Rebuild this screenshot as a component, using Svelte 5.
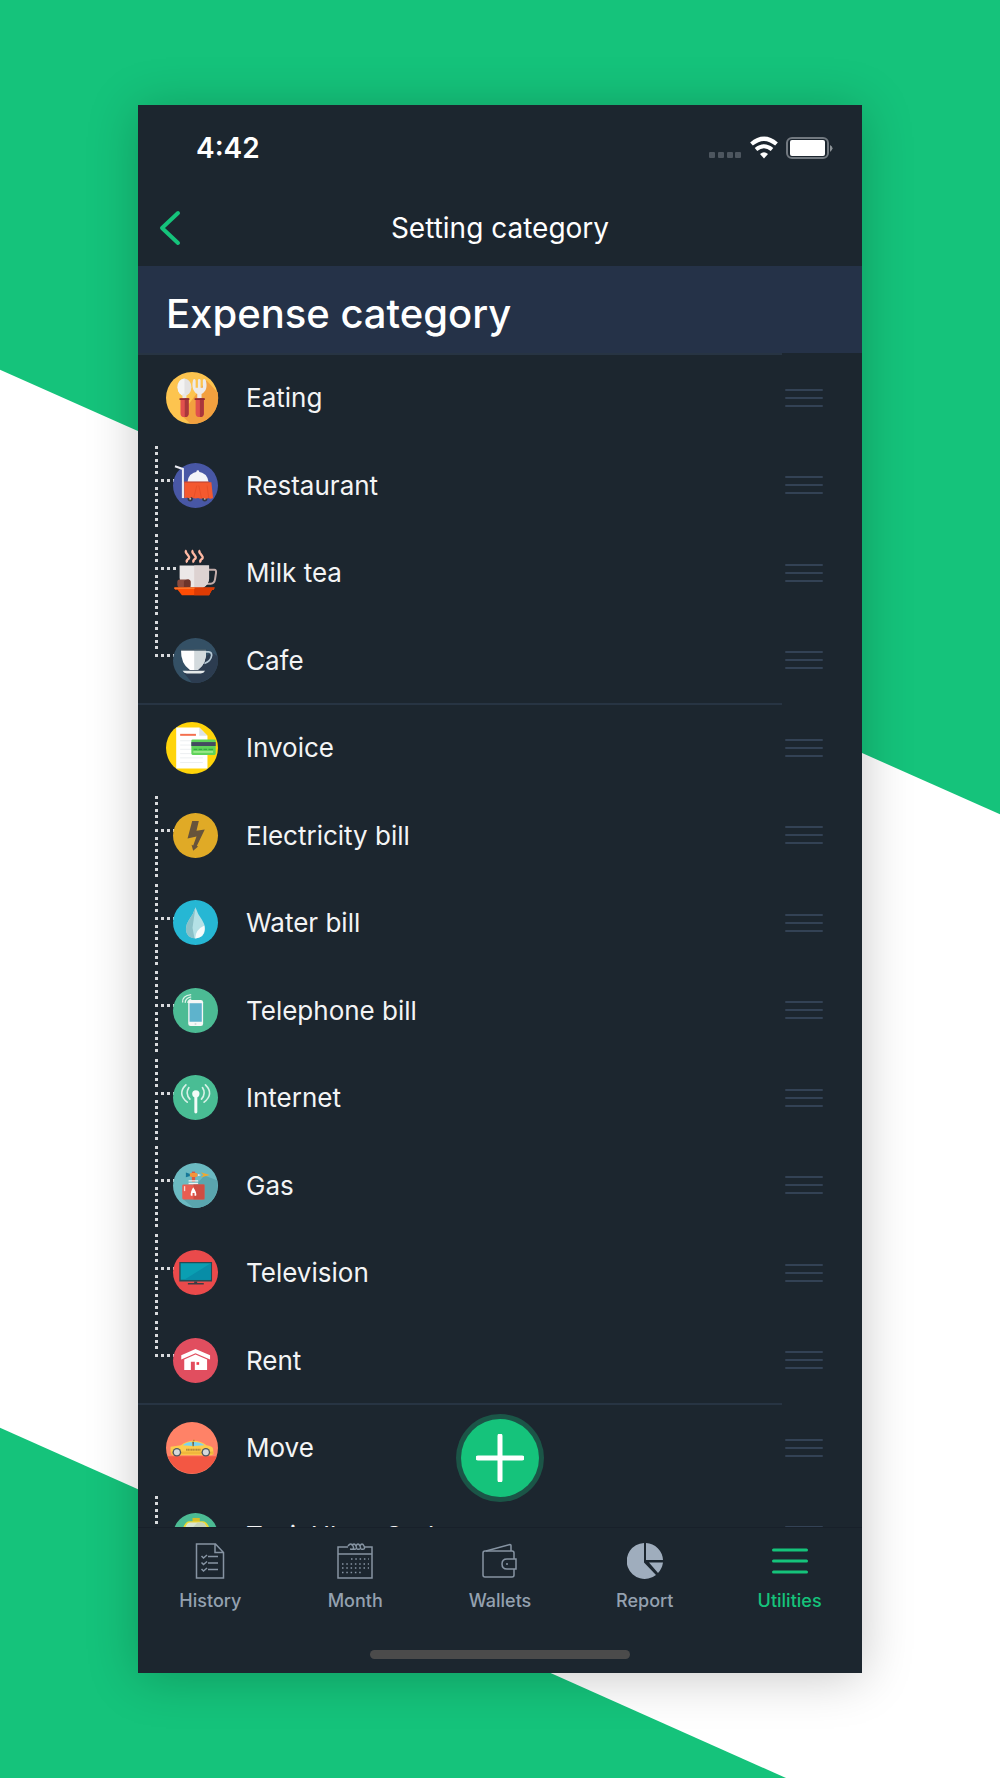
<script>
  const groups = [
    {
      name: 'Eating', icon: 'eating',
      children: [
        { name: 'Restaurant', icon: 'restaurant' },
        { name: 'Milk tea', icon: 'tea' },
        { name: 'Cafe', icon: 'cafe' }
      ]
    },
    {
      name: 'Invoice', icon: 'invoice',
      children: [
        { name: 'Electricity bill', icon: 'electricity' },
        { name: 'Water bill', icon: 'water' },
        { name: 'Telephone bill', icon: 'telephone' },
        { name: 'Internet', icon: 'internet' },
        { name: 'Gas', icon: 'gas' },
        { name: 'Television', icon: 'television' },
        { name: 'Rent', icon: 'rent' }
      ]
    },
    {
      name: 'Move', icon: 'move',
      children: [
        { name: 'Taxi, Uber, Grab', icon: 'taxi' }
      ]
    }
  ];
  const tabs = ['History', 'Month', 'Wallets', 'Report', 'Utilities'];
  const upper = [3, 9, 16, 22, 28];
  const lower = [44, 50, 56, 63, 69, 75, 81];
  const across = [0, 6, 12, 18];
</script>

{#snippet art(name)}
  {#if name === 'eating'}
    <svg class="art" viewBox="83 62 158 158" aria-hidden="true">
      <circle cx="162" cy="141" r="79" fill="#fdc44f" />
      <path d="M206 88L240 124A79 79 0 0 1 158 220L128 192Z" fill="#f2a03f" />
      <ellipse cx="139" cy="108" rx="21" ry="26" fill="#e4e2e2" />
      <path d="M139 82a21 26 0 0 1 0 52z" fill="#f4f3f3" transform="rotate(180 139 108)" />
      <path d="M133 128h12v16h-12z" fill="#e8e6e6" />
      <path d="M165 88q0-5 4-5t4 5v22h7V87q0-4 4-4t4 4v23h7V88q0-5 4-5t5 5c5 18 2 33-13 41v15h-13v-15c-14-8-17-24-13-41z" fill="#eceaea" />
      <path d="M127 142h25v46q0 11-12.500 11T127 188zM173 142h25v46q0 11-12.500 11T173 188z" fill="#e0504d" />
      <path d="M140 142h12v46q0 11-12 11zM186 142h12v46q0 11-12 11z" fill="#a8373b" />
      <path d="M124 142h30v5h-30zM170 142h31v5h-31z" fill="#8e2b32" />
    </svg>
  {:else if name === 'restaurant'}
    <svg class="art" viewBox="104 336 136 136" aria-hidden="true">
      <circle cx="172" cy="404" r="68" fill="#4857a5" />
      <path d="M110 346L134 354V442" fill="none" stroke="#eceef5" stroke-width="6" />
      <path d="M148 393q3-27 31-31q29 4 32 31z" fill="#f3f4f8" />
      <circle cx="179" cy="362" r="4" fill="#f3f4f8" />
      <circle cx="156" cy="444" r="8" fill="#343843" /><circle cx="200" cy="444" r="8" fill="#343843" />
      <circle cx="156" cy="444" r="3" fill="#bbb" /><circle cx="200" cy="444" r="3" fill="#bbb" />
      <path d="M138 394h82l5 48q-8 4-14 0-8 4-15 0-8 4-16 0-8 3-16 0l-3-3q-7 6-15 1-4 3-8 1z" fill="#f4592f" />
      <path d="M176 404l-9 36M182 404l8 38M207 404l5 38" stroke="#e04a24" stroke-width="2" />
      <path d="M138 392h74v4h-74z" fill="#d94b2b" />
      <path d="M131 394h6v48h-6z" fill="#e7e9f0" />
    </svg>
  {:else if name === 'tea'}
    <svg class="art" viewBox="104 58 136 136" aria-hidden="true">
      <path d="M145 59q-5 4 0 9l6 8q5 6-3 11q-5 4-1 9M165 59q-5 4 0 9l6 8q5 6-3 11q-5 4-1 9M186 59q-5 4 0 9l6 8q5 6-3 11q-5 4-1 9" fill="none" stroke="#ffb9a3" stroke-width="7" />
      <path d="M211 118h18q6 0 5 9l-3 20q-2 13-13 13h-12" fill="none" stroke="#c3adab" stroke-width="6" />
      <path d="M124 105h89v38q-1 20-18 28h-47q-24-6-24-30z" fill="#ece8e8" />
      <path d="M168 105h45v38q-1 20-18 28h-27z" fill="#ddd2d1" />
      <rect x="117" y="147" width="40" height="24" rx="7" fill="#8c4b3e" />
      <path d="M137 152q5-6 14-5q6 1 6 7v17h-20z" fill="#6d342a" />
      <path d="M108 171h122l-3 7h-5l-9 17h-82l-13-17h-8z" fill="#ff4d05" />
      <path d="M168 171h62l-3 7h-5l-9 17h-45z" fill="#dd3b04" />
      <path d="M108 171h61v5h-61z" fill="#ff7328" />
    </svg>
  {:else if name === 'cafe'}
    <svg class="art" viewBox="104 321 136 136" aria-hidden="true">
      <circle cx="172" cy="389" r="68" fill="#345065" />
      <path d="M221 364l18 13A68 68 0 0 1 162 456l-26-30z" fill="#2c3c50" />
      <path d="M203 363h9q9 1 9 10q-2 18-22 25" fill="none" stroke="#b6c9d5" stroke-width="5" />
      <path d="M128 356h76q3 42-25 62h-24q-28-19-27-62z" fill="#fff" />
      <path d="M168 356h36q3 42-25 62h-11z" fill="#d3dadd" />
      <path d="M133 420h68q-4 8-13 8h-42q-9 0-13-8z" fill="#e5e9ea" />
      <path d="M128 355h77v4h-77z" fill="#1e3748" />
    </svg>
  {:else if name === 'invoice'}
    <svg class="art" viewBox="83 62 158 158" aria-hidden="true">
      <circle cx="162" cy="141" r="79" fill="#ffd40a" />
      <path d="M114 79h70l25 25v99h-95z" fill="#fff" />
      <path d="M184 79l25 25h-25z" fill="#dde3e7" />
      <path d="M126 101h48" stroke="#f4704f" stroke-width="6" />
      <path d="M126 119h34M126 132h34M126 145h34M126 158h34M126 171h69M126 185h69" stroke="#eceff1" stroke-width="3" />
      <rect x="160" y="115" width="74" height="47" rx="4" fill="#5fd35a" />
      <path d="M160 123h74v12h-74z" fill="#444a60" />
      <path d="M167 145h11M182 145h11M197 145h11M212 145h14" stroke="#35a745" stroke-width="4" />
      <path d="M166 153h60" stroke="#b0f09e" stroke-width="4" />
    </svg>
  {:else if name === 'electricity'}
    <svg class="art" viewBox="104 336 136 136" aria-hidden="true">
      <circle cx="172" cy="404" r="68" fill="#e0aa26" />
      <path d="M162 360h20l-7 30 25-4-24 50 4 1-15 13-5-18 5 2 10-27-27 6z" fill="#66533b" />
    </svg>
  {:else if name === 'water'}
    <svg class="art" viewBox="104 58 136 136" aria-hidden="true">
      <circle cx="172" cy="126" r="68" fill="#26b7d4" />
      <path d="M172 80q6 20 19 37q10 14 10 29q-2 27-29 28q-28-1-29-28q0-15 10-29q13-17 19-37z" fill="#b4e1e6" />
      <path d="M172 80q-6 20-19 37q-10 14-10 29q1 27 26 28l-6-32z" fill="#8bc1c8" />
      <path d="M199 135q4 37-28 39q1-27 28-39z" fill="#f5fbfb" />
    </svg>
  {:else if name === 'telephone'}
    <svg class="art" viewBox="104 321 136 136" aria-hidden="true">
      <circle cx="172" cy="389" r="68" fill="#4cbb94" />
      <path d="M133 365q-2-21 26-24M141 366q-1-14 18-18M149 366q0-8 10-11" fill="none" stroke="#ddf2e8" stroke-width="4" />
      <rect x="150" y="357" width="45" height="79" rx="7" fill="#f5f7f6" />
      <path d="M154 367h37v56h-37z" fill="#5eb3cc" />
      <circle cx="172" cy="430" r="3" fill="#d1d9da" />
    </svg>
  {:else if name === 'internet'}
    <svg class="art" viewBox="104 43 136 136" aria-hidden="true">
      <circle cx="172" cy="111" r="68" fill="#49bd94" />
      <circle cx="173" cy="100" r="11" fill="#f3fbf7" />
      <path d="M173 104v51" stroke="#f3fbf7" stroke-width="9" stroke-linecap="round" />
      <path d="M143 73q-27 27 4 52M152 81q-12 18 3 35M202 73q27 27-4 52M193 81q12 18-3 35" fill="none" stroke="#d6f1e6" stroke-width="5" stroke-linecap="round" />
    </svg>
  {:else if name === 'gas'}
    <svg class="art" viewBox="104 306 136 136" aria-hidden="true">
      <circle cx="172" cy="374" r="68" fill="#6bbac2" />
      <path d="M199 344l38 14A68 68 0 0 1 166 442l-32-27z" fill="#5aa5ae" />
      <path d="M143 335l13 4v6l-13 4z" fill="#147799" />
      <path d="M188 334l27 8-27 8 8-8z" fill="#f0a92e" />
      <path d="M179 339l10 3-10 4z" fill="#e8edf0" />
      <path d="M161 332h10v31h-10z" fill="#d95742" />
      <rect x="155" y="336" width="23" height="12" rx="4" fill="#f2943a" />
      <path d="M151 360h29M151 368h29" stroke="#eef3f4" stroke-width="4" />
      <rect x="132" y="371" width="67" height="45" rx="4" fill="#ea5d51" />
      <path d="M166 371h33v45h-33z" fill="#cf4d43" />
      <path d="M165 379q12 17 9 26h-5v-8h-6v8h-5q-3-9 7-26z" fill="#fff" />
      <path d="M139 376v15" stroke="#f8d6d0" stroke-width="4" />
    </svg>
  {:else if name === 'television'}
    <svg class="art" viewBox="104 58 136 136" aria-hidden="true">
      <circle cx="172" cy="126" r="68" fill="#ea4a4b" />
      <path d="M123 94h99v59h-99z" fill="#244c54" />
      <path d="M127 98h91v50h-91z" fill="#0a9fb2" />
      <path d="M218 98v50h-80z" fill="#088da7" />
      <path d="M168 153h9v5h20v4h-48v-4h19z" fill="#3c3c44" />
    </svg>
  {:else if name === 'rent'}
    <svg class="art" viewBox="104 321 136 136" aria-hidden="true">
      <circle cx="172" cy="389" r="68" fill="#e14e5f" />
      <path d="M129 373l43-19 44 19v13l-44-19-43 19z" fill="#fff" />
      <path d="M138 386l34-15 35 15v32h-37v-25h-12v25h-20z" fill="#fff" />
      <path d="M175 394h8v8h-8z" fill="#ef3c49" />
    </svg>
  {:else if name === 'move'}
    <svg class="art" viewBox="83 62 158 158" aria-hidden="true">
      <circle cx="162" cy="141" r="79" fill="#ff8267" />
      <path d="M88 166h149A79 79 0 0 1 88 166z" fill="#f35743" />
      <path d="M97 137l31-4q17-14 38-14 24 0 40 14 17 2 20 10l1 17-6 3H102q-7-7-5-26z" fill="#fdcb4d" />
      <path d="M134 133q12-10 27-10l3 12zM168 123q18 0 32 10l-34 2z" fill="#79d4f1" />
      <path d="M163 122h5l-1 14h-3z" fill="#4b5861" />
      <path d="M165 116h5v4h-5z" fill="#c48b24" />
      <path d="M144 146h45" stroke="#b5893a" stroke-width="6" stroke-dasharray="4 1" />
      <path d="M100 152h127v8H100z" fill="#f0b73d" />
      <circle cx="116" cy="154" r="13" fill="#4d5660" /><circle cx="204" cy="154" r="13" fill="#4d5660" />
      <circle cx="116" cy="154" r="9" fill="#d5d9dc" /><circle cx="204" cy="154" r="9" fill="#d5d9dc" />
    </svg>
  {:else}
    <svg class="art" viewBox="104 336 136 136" aria-hidden="true">
      <circle cx="172" cy="404" r="68" fill="#4cbb94" />
      <path d="M163 351h22v12h-22z" fill="#d9bd27" />
      <path d="M132 392q6-31 22-31h39q18 0 23 31v30h-84z" fill="#ecd934" />
      <path d="M138 390q6-25 17-25h36q12 0 18 25z" fill="#d9e4cf" />
      <path d="M178 365h13q12 0 18 25h-55z" fill="#c5d3b8" />
    </svg>
  {/if}
{/snippet}

{#snippet branch(last)}
  <svg class="branch" viewBox="0 0 22 84" aria-hidden="true">
    {#each upper as y}<rect x="0" {y} width="3" height="3" />{/each}
    {#each across as x}<rect {x} y="36" width="3" height="3" />{/each}
    {#if !last}{#each lower as y}<rect x="0" {y} width="3" height="3" />{/each}{/if}
  </svg>
{/snippet}

{#snippet grip(name)}
  <button class="grip" aria-label={`Reorder ${name}`}>
    <svg viewBox="0 0 38 20" aria-hidden="true"><path d="M1 2h36M1 10h36M1 18h36" /></svg>
  </button>
{/snippet}

<div class="page">
  <div class="phone">
    <div class="status">
      <span class="time">4:42</span>
      <svg class="signals" viewBox="0 0 126 24" aria-hidden="true">
        <g fill="#4d565f">
          <rect x="1" y="16" width="6" height="6" rx="1" /><rect x="10" y="16" width="6" height="6" rx="1" />
          <rect x="19" y="16" width="6" height="6" rx="1" /><rect x="27" y="16" width="6" height="6" rx="1" />
        </g>
        <path d="M43.500 8Q56-2.500 68.500 8" fill="none" stroke="#fff" stroke-width="4.200" />
        <path d="M48 13.500Q56 7 64 13.500" fill="none" stroke="#fff" stroke-width="4" />
        <path d="M52 18Q56 14.500 60 18L56 22.500z" fill="#fff" />
        <rect x="79" y="2" width="41" height="20" rx="5" fill="none" stroke="#727980" stroke-width="2" />
        <rect x="82" y="4" width="35" height="16" rx="2" fill="#fff" />
        <path d="M122 9q5 3 0 7z" fill="#8b9196" />
      </svg>
    </div>

    <header class="nav">
      <button class="back" aria-label="Back">
        <svg viewBox="0 0 22 36" aria-hidden="true"><path d="M19 3L3 18L19 33" /></svg>
      </button>
      <h1>Setting category</h1>
    </header>

    <h2>Expense category</h2>

    <main>
      <div class="scroll">
        {#each groups as group}
          <ul class="group">
            <li class="row">
              <span class="icon parent">{@render art(group.icon)}</span>
              <span class="name">{group.name}</span>
              {@render grip(group.name)}
            </li>
            {#each group.children as child, i}
              <li class="row">
                {@render branch(i === group.children.length - 1)}
                <span class="icon child">{@render art(child.icon)}</span>
                <span class="name">{child.name}</span>
                {@render grip(child.name)}
              </li>
            {/each}
          </ul>
        {/each}
      </div>
      <button class="add" aria-label="Add category">
        <svg viewBox="0 0 48 48" aria-hidden="true"><path d="M24 2v44M2 24h44" /></svg>
      </button>
    </main>

    <nav class="tabs" aria-label="Main">
      {#each tabs as tab}
        <a href={`#${tab.toLowerCase()}`} class:active={tab === 'Utilities'}>
          <svg class="glyph" viewBox="0 0 36 36" aria-hidden="true">
            {#if tab === 'History'}
              <path d="M4.500 1H23.500L31.500 9.500V35H4.500zM23 1V9.500H31.500" />
              <path d="M9.500 13l2 2 3.500-3M16 13.500h10M9.500 19.500l2 2 3.500-3M16 20h10M9.500 26l2 2 3.500-3M16 26.500h10" />
            {:else if tab === 'Month'}
              <path d="M11 4H1V35H35V4H27M1 11H35" />
              <path d="M11 3q3-4 5 0t-3 3M15 3q2-4 4 0t-3 3M19 3q2-4 4 0t-3 3M23 3q2-4 4 0t-3 3" />
              <path stroke-dasharray="1.500 2.800" d="M14 16H32M5 21H32M5 25H32M5 29.500H24" />
            {:else if tab === 'Wallets'}
              <rect x="1" y="8" width="31" height="26" rx="2" />
              <path d="M4 8L28 1.500q1 0 1 1V8" />
              <path class="pocket" d="M34 16H25q-5 0-5 5t5 5H34z" />
              <path d="M24 21h2" />
            {:else if tab === 'Report'}
              <path class="solid" d="M17 0V19.500L29 32A18 18 0 1 1 17 0zM19 0A18 18 0 0 1 36 17H19zM22 19.500H36Q35 26 31 30z" />
            {:else}
              <path class="bold" d="M1.500 7H34.500M1.500 18H34.500M1.500 29H34.500" />
            {/if}
          </svg>
          <span>{tab}</span>
        </a>
      {/each}
    </nav>
    <div class="home"></div>
  </div>
</div>

<style>
  :global(body) { margin: 0; }
  .page {
    position: relative;
    box-sizing: border-box;
    height: 100vh;
    padding: 105px 13.8%;
    display: flex;
    background: #15c37b;
    font-family: Inter, "Liberation Sans", sans-serif;
    color: #fff;
  }
  .page::before {
    content: "";
    position: absolute;
    inset: 0;
    background: #fff;
    clip-path: polygon(0 20.8%, 100% 45.8%, 100% 100%, 78.6% 100%, 0 80.3%);
  }
  .phone {
    position: relative;
    flex: 1;
    min-width: 0;
    display: flex;
    flex-direction: column;
    background: #1c262f;
    box-shadow: 0 4px 48px rgba(0, 0, 0, 0.22);
  }
  button {
    border: 0;
    padding: 0;
    background: none;
    display: flex;
    align-items: center;
    justify-content: center;
    cursor: pointer;
  }
  h1, h2, ul { margin: 0; padding: 0; }
  .status {
    height: 84px;
    box-sizing: border-box;
    padding: 2px 28px 0 58px;
    display: flex;
    align-items: center;
    justify-content: space-between;
  }
  .time { font-size: 28px; font-weight: 600; }
  .signals { width: 126px; height: 24px; }
  .nav {
    height: 77px;
    display: grid;
    grid-template-columns: 64px 1fr 64px;
    align-items: center;
  }
  .back { height: 64px; }
  .back svg { width: 22px; height: 36px; }
  .back path {
    fill: none;
    stroke: #15c37b;
    stroke-width: 4;
    stroke-linecap: round;
    stroke-linejoin: round;
  }
  h1 { text-align: center; font-size: 28px; font-weight: 400; }
  h2 {
    height: 87px;
    padding: 8px 28px 0;
    box-sizing: border-box;
    display: flex;
    align-items: center;
    background: #253248;
    font-size: 40px;
    font-weight: 500;
  }
  main { position: relative; flex: 1; min-height: 0; }
  .scroll { height: 100%; overflow-y: auto; scrollbar-width: none; }
  .group { list-style: none; }
  .group::before {
    content: "";
    display: block;
    height: 2px;
    margin: 0 80px -2px 0;
    background: #273443;
  }
  .row {
    display: flex;
    align-items: center;
    height: 88px;
    padding: 1px 36px 0 17px;
    box-sizing: border-box;
  }
  .row:nth-child(even) { height: 87px; }
  .branch { width: 22px; height: 84px; margin-right: -4px; fill: #d8dadd; }
  .icon { position: relative; flex: none; display: flex; }
  .parent { width: 52px; height: 52px; margin-left: 11px; }
  .child { width: 45px; height: 45px; }
  .art { width: 100%; height: 100%; overflow: visible; }
  .name { flex: 1; padding-left: 28px; font-size: 26px; color: #f3f4f5; }
  .grip { width: 44px; height: 44px; }
  .grip svg { width: 38px; height: 20px; }
  .grip path { stroke: #334255; stroke-width: 2; stroke-linecap: round; }
  .add {
    position: absolute;
    left: 0;
    right: 0;
    bottom: 30px;
    margin: 0 auto;
    width: 78px;
    height: 78px;
    border-radius: 50%;
    background: #15c37b;
    box-shadow: 0 0 0 5px #1b5547;
  }
  .add svg { width: 48px; height: 48px; }
  .add path { stroke: #fff; stroke-width: 5; stroke-linecap: round; }
  .tabs {
    display: flex;
    border-top: 1px solid #18202a;
    padding-top: 15px;
  }
  .tabs a {
    flex: 1;
    display: flex;
    flex-direction: column;
    align-items: center;
    gap: 10px;
    color: #94a1b0;
    text-decoration: none;
    font-size: 18px;
    line-height: 24px;
    font-weight: 500;
  }
  .tabs .active { color: #15c37b; }
  .glyph {
    width: 36px;
    height: 36px;
    fill: none;
    stroke: #8694a3;
    stroke-width: 1.5;
  }
  .pocket { fill: #1c262f; }
  .solid { fill: #9fadbd; stroke: none; }
  .bold { stroke: #15c37b; stroke-width: 3; stroke-linecap: round; }
  .home {
    width: 36%;
    height: 9px;
    margin: 37px auto 14px;
    border-radius: 5px;
    background: #4b4b4b;
  }
</style>
